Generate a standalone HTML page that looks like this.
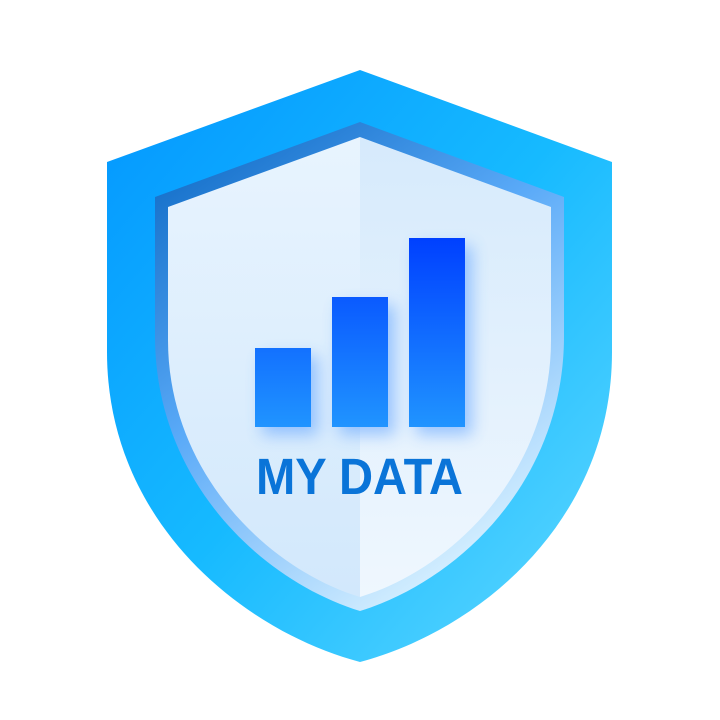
<!DOCTYPE html>
<html><head><style>html,body{margin:0;padding:0;background:#fff;width:720px;height:720px;overflow:hidden}</style></head>
<body>
<svg width="720" height="720" viewBox="0 0 720 720" xmlns="http://www.w3.org/2000/svg">
<defs>
<linearGradient id="o" x1="0" y1="0" x2="1" y2="1"><stop offset="0" stop-color="#0396ff"/><stop offset="0.5" stop-color="#16baff"/><stop offset="1" stop-color="#62d8ff"/></linearGradient>
<linearGradient id="r" x1="0" y1="0" x2="0.6" y2="1"><stop offset="0" stop-color="#0764c0"/><stop offset="0.5" stop-color="#5aaaf8"/><stop offset="1" stop-color="#d5efff"/></linearGradient>
<linearGradient id="fl" x1="0" y1="0" x2="0" y2="1"><stop offset="0" stop-color="#e8f4fe"/><stop offset="1" stop-color="#d2e8fc"/></linearGradient>
<linearGradient id="fr" x1="0" y1="0" x2="0" y2="1"><stop offset="0" stop-color="#d6eafc"/><stop offset="1" stop-color="#eff7fe"/></linearGradient>
<linearGradient id="b" gradientUnits="userSpaceOnUse" x1="0" y1="238" x2="0" y2="427"><stop offset="0" stop-color="#0040ff"/><stop offset="1" stop-color="#2094ff"/></linearGradient>
<filter id="s" x="-50%" y="-50%" width="200%" height="200%"><feGaussianBlur stdDeviation="8"/></filter>
</defs>
<path d="M360 70 L107 162 L107 352 C107 520 240 630 360 662 C480 630 612 520 612 352 L612 162 Z" fill="url(#o)"/>
<path d="M360 122 L155 197 L155 336 C155 480 260 580 360 611 C460 580 564 480 564 336 L564 197 Z" fill="url(#r)"/>
<path d="M360 137 L168 207 L168 340 C168 470 265 568 360 597 L360 137 Z" fill="url(#fl)"/>
<path d="M360 137 L551 207 L551 340 C551 470 455 568 360 597 L360 137 Z" fill="url(#fr)"/>
<g opacity="0.45" filter="url(#s)" fill="#3a8cff">
<rect x="262" y="356" width="56" height="79"/><rect x="339" y="305" width="56" height="130"/><rect x="416" y="246" width="56" height="189"/>
</g>
<rect x="255" y="348" width="56" height="79" fill="url(#b)"/>
<rect x="332" y="297" width="56" height="130" fill="url(#b)"/>
<rect x="409" y="238" width="56" height="189" fill="url(#b)"/>
<text x="256" y="494" font-family="Liberation Sans, sans-serif" font-weight="bold" font-size="51" fill="#0a74d8" textLength="207" lengthAdjust="spacingAndGlyphs">MY DATA</text>
</svg>
</body></html>
